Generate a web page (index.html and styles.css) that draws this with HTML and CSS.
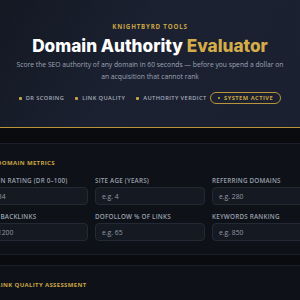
FILE: index.html
```html
<!DOCTYPE html>
<html lang="en">
<head>
<meta charset="utf-8">
<title>Domain Authority Evaluator</title>
<link rel="stylesheet" href="styles.css">
</head>
<body>
<header class="hero">
  <div class="brand">KNIGHTBYRD TOOLS</div>
  <h1 class="title">Domain Authority <span class="accent">Evaluator</span></h1>
  <p class="subtitle">Score the SEO authority of any domain in 60 seconds — before you spend a dollar on an acquisition that cannot rank</p>
  <div class="tags">
    <span class="tag"><i class="dot"></i>DR Scoring</span>
    <span class="tag"><i class="dot"></i>Link Quality</span>
    <span class="tag"><i class="dot"></i>Authority Verdict</span>
    <span class="status"><i class="sdot"></i>System Active</span>
  </div>
</header>
<main class="main">
  <section class="panel">
    <h2 class="panel-title"><i class="mark"></i>Domain Metrics</h2>
    <div class="grid">
      <label class="field"><span class="label">Domain Rating (DR 0–100)</span><input class="input" type="text" placeholder="e.g. 34"></label>
      <label class="field"><span class="label">Site Age (Years)</span><input class="input" type="text" placeholder="e.g. 4"></label>
      <label class="field"><span class="label">Referring Domains</span><input class="input" type="text" placeholder="e.g. 280"></label>
      <label class="field"><span class="label">Total Backlinks</span><input class="input" type="text" placeholder="e.g. 1200"></label>
      <label class="field"><span class="label">Dofollow % of Links</span><input class="input" type="text" placeholder="e.g. 65"></label>
      <label class="field"><span class="label">Keywords Ranking</span><input class="input" type="text" placeholder="e.g. 850"></label>
    </div>
  </section>
  <section class="panel">
    <h2 class="panel-title"><i class="mark"></i>Link Quality Assessment</h2>
    <div class="grid">
      <label class="field"><span class="label">Anchor Text Distribution</span><input class="input" type="text" placeholder="e.g. Natural"></label>
      <label class="field"><span class="label">Toxic Links %</span><input class="input" type="text" placeholder="e.g. 5"></label>
      <label class="field"><span class="label">Traffic (Monthly)</span><input class="input" type="text" placeholder="e.g. 3000"></label>
    </div>
  </section>
</main>
</body>
</html>
```

FILE: styles.css
```css
html { overflow: hidden; }
body {
  margin: 0;
  background: #090b0f;
  font-family: "Open Sans", "Noto Sans", sans-serif;
  color: #d8dce4;
}
.hero {
  box-sizing: border-box;
  height: 128px;
  padding: 22px 0 0;
  background: linear-gradient(120deg, #141823 0%, #1b2131 45%, #1a2030 100%);
  border-bottom: 1px solid #b8953a;
  text-align: center;
}
.brand {
  color: #c9a544;
  font-size: 6.2px;
  font-weight: 700;
  letter-spacing: 0.8px;
  line-height: 10px;
}
.title {
  margin: 3px 0 0;
  font-family: Inter, "Noto Sans", sans-serif;
  font-weight: 800;
  font-size: 17.2px;
  line-height: 22px;
  color: #ffffff;
}
.accent { color: #d4ad4a; }
.subtitle {
  margin: 2px auto 0;
  max-width: 268px;
  color: #9da4b4;
  font-size: 6.75px;
  line-height: 12px;
}
.tags {
  margin-top: 9px;
  display: flex;
  justify-content: center;
  align-items: center;
  gap: 11px;
  white-space: nowrap;
}
.tag {
  display: flex;
  align-items: center;
  gap: 4px;
  color: #a6acb9;
  font-size: 5.7px;
  font-weight: 600;
  letter-spacing: 0.4px;
  text-transform: uppercase;
}
.dot {
  width: 3px;
  height: 3px;
  background: #c9a544;
  border-radius: 1px;
}
.status {
  margin-left: -8px;
  display: flex;
  align-items: center;
  gap: 4px;
  height: 10px;
  padding: 0 7px;
  border: 1px solid #b8953a;
  border-radius: 7px;
  color: #c9a544;
  font-size: 5.7px;
  font-weight: 700;
  letter-spacing: 0.5px;
  text-transform: uppercase;
}
.sdot {
  width: 2.5px;
  height: 2.5px;
  border-radius: 50%;
  background: #d4ad4a;
}
.main {
  display: flex;
  flex-direction: column;
  align-items: center;
  gap: 10px;
  padding-top: 15px;
}
.panel {
  flex-shrink: 0;
  width: 344px;
  padding: 14px 16px 13px;
  background: #0e1118;
  border: 1px solid #1a1f29;
  border-radius: 6px;
}
.panel-title {
  margin: 0 0 8px;
  display: flex;
  align-items: center;
  gap: 6px;
  color: #c9a544;
  font-size: 6px;
  font-weight: 700;
  letter-spacing: 0.35px;
  line-height: 10px;
  text-transform: uppercase;
}
.mark {
  width: 13px;
  height: 2px;
  background: #c9a544;
}
.grid {
  display: grid;
  grid-template-columns: repeat(3, 110px);
  column-gap: 7px;
  row-gap: 7px;
}
.field {
  display: flex;
  flex-direction: column;
  gap: 1px;
}
.label {
  color: #9aa0ac;
  font-size: 6.3px;
  font-weight: 600;
  letter-spacing: 0.2px;
  line-height: 10px;
  text-transform: uppercase;
  white-space: nowrap;
}
.input {
  box-sizing: border-box;
  width: 100%;
  height: 18px;
  margin: 0;
  padding: 0 6px;
  background: #151921;
  border: 1px solid #242a35;
  border-radius: 4px;
  font-family: "Open Sans", sans-serif;
  font-size: 6.8px;
  color: #d8dce4;
  outline: none;
}
.input::placeholder { color: #9399a5; }
```
